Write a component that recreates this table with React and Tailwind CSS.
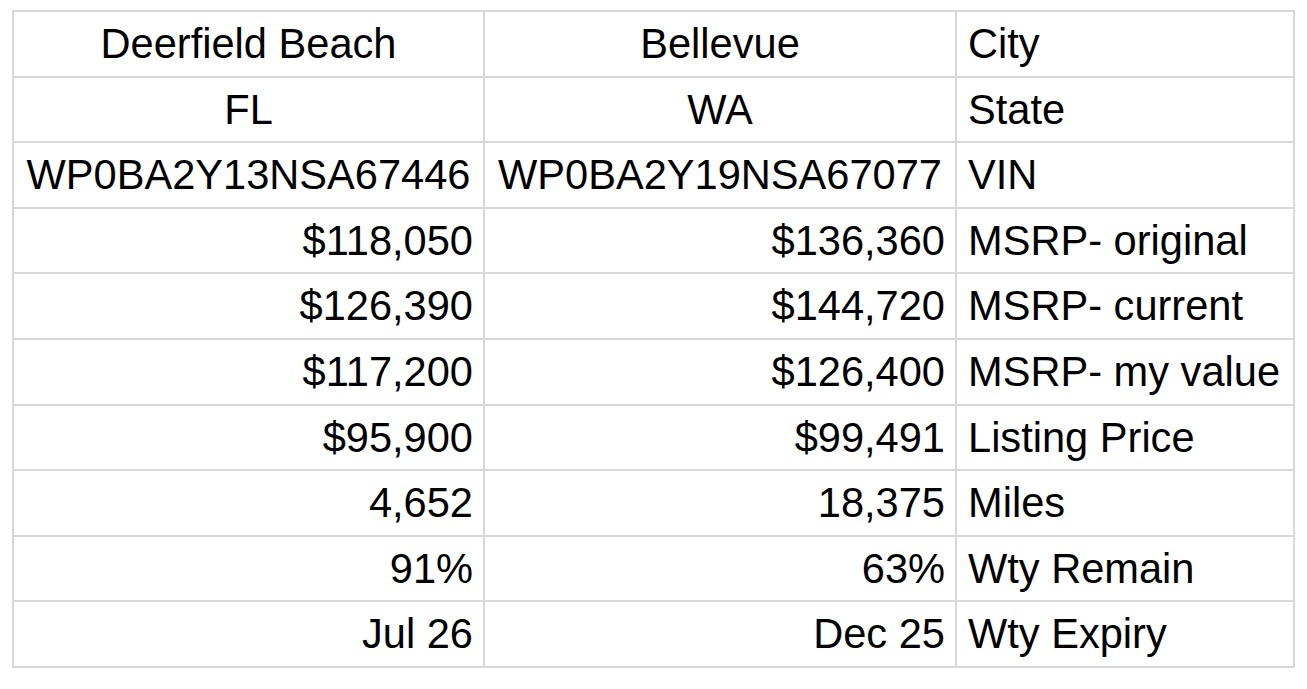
const rows = [
  ['Deerfield Beach', 'Bellevue', 'City', 'center'],
  ['FL', 'WA', 'State', 'center'],
  ['WP0BA2Y13NSA67446', 'WP0BA2Y19NSA67077', 'VIN', 'center'],
  ['$118,050', '$136,360', 'MSRP- original', 'right'],
  ['$126,390', '$144,720', 'MSRP- current', 'right'],
  ['$117,200', '$126,400', 'MSRP- my value', 'right'],
  ['$95,900', '$99,491', 'Listing Price', 'right'],
  ['4,652', '18,375', 'Miles', 'right'],
  ['91%', '63%', 'Wty Remain', 'right'],
  ['Jul 26', 'Dec 25', 'Wty Expiry', 'right'],
];

export default function App() {
  return (
    <div className="w-[1307px] h-[689px] bg-white pl-[12px] pt-[10px] font-['Liberation_Sans',Arial,sans-serif] text-black">
      <table className="table-fixed border-collapse w-[1281px]">
        <colgroup>
          <col className="w-[471px]" />
          <col className="w-[472px]" />
          <col className="w-[338px]" />
        </colgroup>
        <tbody>
          {rows.map(([a, b, label, align]) => (
            <tr key={label} className="h-[65.6px]">
              <td
                className={
                  'border-2 border-[#d8d8d8] px-[10px] text-[41.6px] leading-none whitespace-nowrap ' +
                  (align === 'center' ? 'text-center' : 'text-right')
                }
              >
                {a}
              </td>
              <td
                className={
                  'border-2 border-[#d8d8d8] px-[10px] text-[41.6px] leading-none whitespace-nowrap ' +
                  (align === 'center' ? 'text-center' : 'text-right')
                }
              >
                {b}
              </td>
              <td className="border-2 border-[#d8d8d8] px-[11px] text-[41.6px] leading-none whitespace-nowrap text-left">
                {label}
              </td>
            </tr>
          ))}
        </tbody>
      </table>
    </div>
  );
}
